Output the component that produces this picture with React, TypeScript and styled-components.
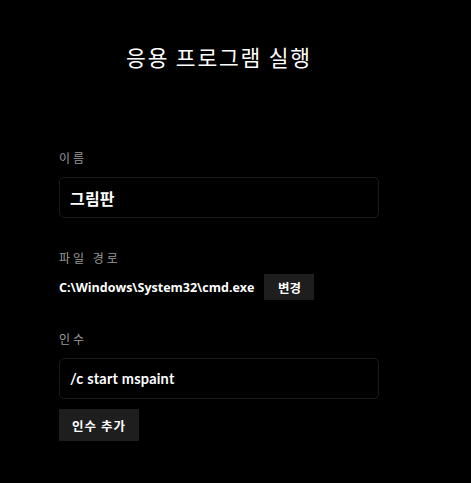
import styled, { createGlobalStyle } from "styled-components";

const GlobalStyle = createGlobalStyle`
  html, body {
    margin: 0;
    padding: 0;
    background: #000;
  }
  body {
    font-family: "Open Sans", "Noto Sans CJK KR", sans-serif;
    color: #fff;
  }
`;

function App() {
  return (
    <>
      <GlobalStyle />
      <Page>
        <Title>응용 프로그램 실행</Title>

        <Label $top={81}>이름</Label>
        <Field>
          <FieldText $size={16}>그림판</FieldText>
        </Field>

        <Label $top={33}>파일 경로</Label>
        <PathRow>
          <PathText>C:\Windows\System32\cmd.exe</PathText>
          <SmallButton>변경</SmallButton>
        </PathRow>

        <Label $top={32}>인수</Label>
        <Field>
          <FieldText $size={14.5}>/c start mspaint</FieldText>
        </Field>
        <AddButton>인수 추가</AddButton>
      </Page>
    </>
  );
}

const Page = styled.div`
  width: 320px;
  margin-left: 59px;
  padding-top: 44px;
  display: flex;
  flex-direction: column;
`;

const Title = styled.h1`
  margin: 0;
  text-align: center;
  font-family: "Noto Sans CJK KR", sans-serif;
  font-size: 21.5px;
  font-weight: 400;
  line-height: 26px;
  letter-spacing: 1.8px;
`;

const Label = styled.div<{ $top: number }>`
  margin-top: ${({ $top }) => $top}px;
  font-family: "Noto Sans CJK KR", sans-serif;
  font-size: 12px;
  line-height: 14px;
  letter-spacing: 3px;
  color: #9a9a9a;
`;

const Field = styled.div`
  margin-top: 12px;
  height: 41px;
  box-sizing: border-box;
  border: 1px solid #1c1c1c;
  border-radius: 5px;
  display: flex;
  align-items: center;
  padding: 0 10px;
`;

const FieldText = styled.span<{ $size: number }>`
  font-family: Lato, "Noto Sans CJK KR", sans-serif;
  font-size: ${({ $size }) => $size}px;
  font-weight: 700;
  letter-spacing: 0.2px;
`;

const PathRow = styled.div`
  margin-top: 9px;
  display: flex;
  align-items: center;
  gap: 10px;
`;

const PathText = styled.span`
  font-size: 12.5px;
  font-weight: 700;
`;

const SmallButton = styled.button`
  width: 50px;
  height: 26px;
  border: none;
  background: #1e1e1e;
  color: #fff;
  font-family: "Noto Sans CJK KR", sans-serif;
  font-size: 12.5px;
  font-weight: 700;
  padding: 0;
`;

const AddButton = styled.button`
  margin-top: 10px;
  width: 80px;
  height: 32px;
  border: none;
  background: #1e1e1e;
  color: #fff;
  font-family: "Noto Sans CJK KR", sans-serif;
  font-size: 12.5px;
  font-weight: 700;
  letter-spacing: 1px;
  padding: 0;
`;

export default App;
